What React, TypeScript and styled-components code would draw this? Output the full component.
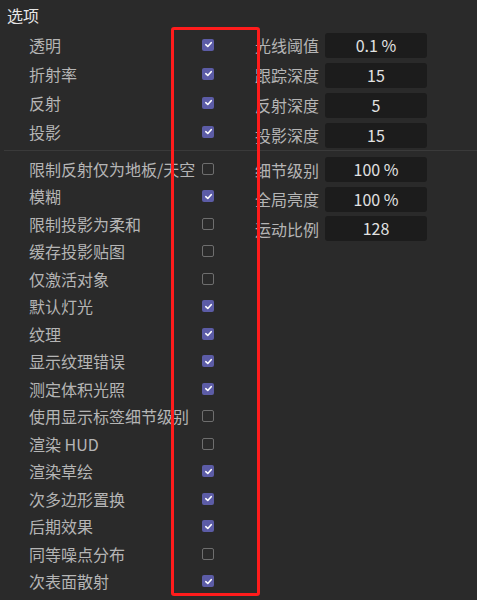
import styled, { createGlobalStyle } from 'styled-components';

const GlobalStyle = createGlobalStyle`
  html, body {
    margin: 0;
    padding: 0;
    background: #2a2a2a;
  }
  body {
    font-family: 'Noto Sans CJK SC', 'Noto Sans', sans-serif;
  }
`;

const Panel = styled.div`
  position: relative;
  width: 477px;
  height: 600px;
  overflow: hidden;
  background: #2a2a2a;
`;

const Title = styled.div`
  height: 30px;
  line-height: 30px;
  padding-left: 7px;
  font-size: 16px;
  color: #e6e6e6;
`;

const Section = styled.div<{ $top?: number }>`
  display: flex;
  padding-top: ${(p) => p.$top ?? 0}px;
`;

const Divider = styled.div`
  height: 1px;
  margin: 0 0 0 4px;
  background: #3a3a3a;
`;

const LeftCol = styled.div`
  width: 215px;
  display: flex;
  flex-direction: column;
`;

const RightCol = styled.div`
  margin-left: 20px;
  display: flex;
  flex-direction: column;
`;

const CheckRow = styled.div<{ $h: number }>`
  height: ${(p) => p.$h}px;
  display: grid;
  grid-template-columns: 173px 13px;
  align-items: center;
  padding-left: 29px;
`;

const Label = styled.span`
  font-size: 16px;
  color: #b5b5b5;
  white-space: nowrap;
  overflow: visible;
`;

const Box = styled.span<{ $on: boolean }>`
  width: 12px;
  height: 12px;
  box-sizing: border-box;
  border-radius: 2px;
  display: flex;
  align-items: center;
  justify-content: center;
  background: ${(p) => (p.$on ? '#5c5ca6' : 'transparent')};
  border: ${(p) => (p.$on ? 'none' : '1.5px solid #6e6e6e')};
`;

const FieldRow = styled.div<{ $h: number }>`
  height: ${(p) => p.$h}px;
  display: grid;
  grid-template-columns: 84px 102px;
  column-gap: 6px;
  align-items: center;
`;

const FieldLabel = styled(Label)`
  text-align: right;
`;

const Field = styled.div`
  height: 25px;
  border-radius: 3px;
  background: #1c1c1c;
  color: #e2e2e2;
  font-size: 16px;
  line-height: 25px;
  text-align: center;
`;

const Highlight = styled.div`
  position: absolute;
  left: 171px;
  top: 27px;
  width: 89px;
  height: 569px;
  box-sizing: border-box;
  border: 3px solid #ff1c1c;
  border-radius: 3px;
  pointer-events: none;
`;

function Check({ on }: { on: boolean }) {
  return (
    <Box $on={on}>
      {on && (
        <svg width="9" height="9" viewBox="0 0 10 10">
          <path
            d="M2 5.2 L4.2 7.2 L8 3"
            fill="none"
            stroke="#ffffff"
            strokeWidth="1.8"
            strokeLinecap="round"
            strokeLinejoin="round"
          />
        </svg>
      )}
    </Box>
  );
}

const topChecks: [string, boolean][] = [
  ['透明', true],
  ['折射率', true],
  ['反射', true],
  ['投影', true],
];

const bottomChecks: [string, boolean][] = [
  ['限制反射仅为地板/天空', false],
  ['模糊', true],
  ['限制投影为柔和', false],
  ['缓存投影贴图', false],
  ['仅激活对象', false],
  ['默认灯光', true],
  ['纹理', true],
  ['显示纹理错误', true],
  ['测定体积光照', true],
  ['使用显示标签细节级别', false],
  ['渲染 HUD', false],
  ['渲染草绘', true],
  ['次多边形置换', true],
  ['后期效果', true],
  ['同等噪点分布', false],
  ['次表面散射', true],
];

const topFields: [string, string][] = [
  ['光线阈值', '0.1 %'],
  ['跟踪深度', '15'],
  ['反射深度', '5'],
  ['投影深度', '15'],
];

const bottomFields: [string, string][] = [
  ['细节级别', '100 %'],
  ['全局亮度', '100 %'],
  ['运动比例', '128'],
];

export default function App() {
  return (
    <Panel>
      <GlobalStyle />
      <Title>选项</Title>
      <Section>
        <LeftCol>
          {topChecks.map(([name, on]) => (
            <CheckRow key={name} $h={29}>
              <Label>{name}</Label>
              <Check on={on} />
            </CheckRow>
          ))}
        </LeftCol>
        <RightCol>
          {topFields.map(([name, value]) => (
            <FieldRow key={name} $h={30}>
              <FieldLabel>{name}</FieldLabel>
              <Field>{value}</Field>
            </FieldRow>
          ))}
        </RightCol>
      </Section>
      <Divider />
      <Section $top={4}>
        <LeftCol>
          {bottomChecks.map(([name, on]) => (
            <CheckRow key={name} $h={27.5}>
              <Label>{name}</Label>
              <Check on={on} />
            </CheckRow>
          ))}
        </LeftCol>
        <RightCol>
          {bottomFields.map(([name, value]) => (
            <FieldRow key={name} $h={29.5}>
              <FieldLabel>{name}</FieldLabel>
              <Field>{value}</Field>
            </FieldRow>
          ))}
        </RightCol>
      </Section>
      <Highlight />
    </Panel>
  );
}
